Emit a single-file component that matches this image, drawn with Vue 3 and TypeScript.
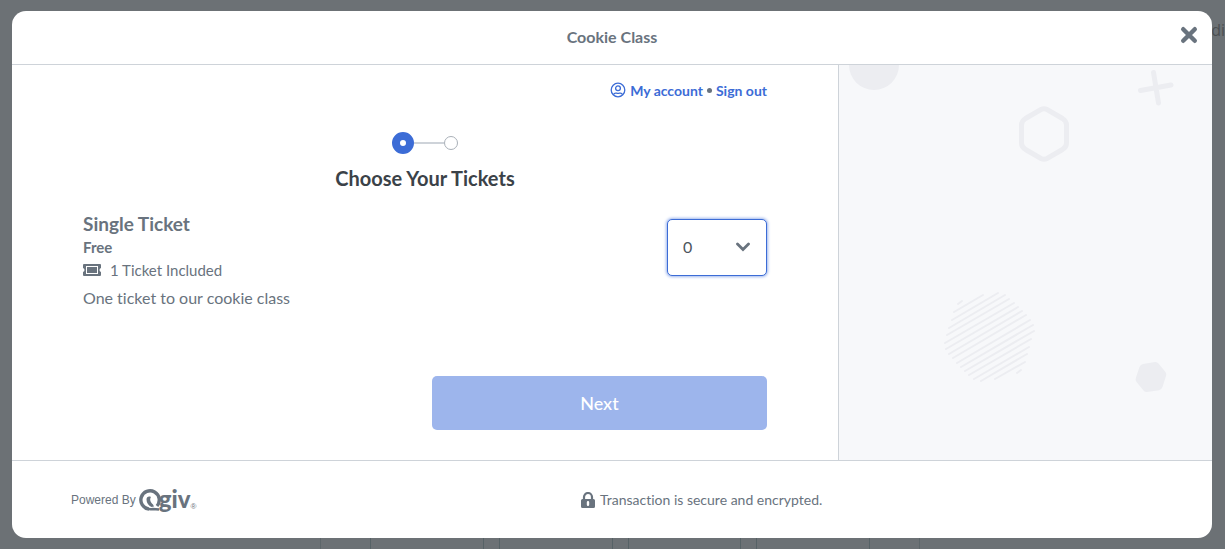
<script setup lang="ts">
import { ref } from 'vue'

interface Ticket {
  name: string
  price: string
  included: string
  description: string
}

const ticket: Ticket = {
  name: 'Single Ticket',
  price: 'Free',
  included: '1 Ticket Included',
  description: 'One ticket to our cookie class',
}

const quantity = ref(0)
const quantities = [0, 1, 2, 3, 4, 5]

/* Stripes of the round hatched decoration: x1, y1, x2, y2 */
const stripes: number[][] = [
  [28, 24, 32, 21],
  [24, 32, 53, 15],
  [22, 40, 68, 13],
  [19, 48, 75, 15],
  [17, 55, 79, 19],
  [15, 63, 84, 23],
  [16, 69, 88, 27],
  [19, 74, 92, 31],
  [23, 78, 96, 35],
  [27, 83, 100, 40],
  [31, 87, 103, 45],
  [35, 91, 104, 51],
  [39, 95, 101, 59],
  [44, 99, 99, 67],
  [51, 101, 97, 74],
  [65, 99, 95, 82],
  [87, 93, 91, 90],
]
</script>

<template>
  <div class="page">
    <div class="backdrop-page" aria-hidden="true">
      <span class="edge-text">idi</span>
      <div class="amounts">
        <span v-for="n in 4" :key="n" class="amount"></span>
      </div>
    </div>

    <section class="modal" role="dialog" aria-labelledby="dialog-title">
      <header class="head">
        <h1 id="dialog-title">Cookie Class</h1>
        <button class="close" type="button" aria-label="Close">
          <svg width="18" height="18" viewBox="0 0 18 18">
            <path d="M3.200 3.200L14.800 14.800M14.800 3.200L3.200 14.800" stroke="currentColor" stroke-width="4.400" stroke-linecap="round" />
          </svg>
        </button>
      </header>

      <div class="body">
        <main class="content">
          <nav class="account">
            <svg width="16" height="16" viewBox="0 0 16 16" fill="none" stroke="currentColor" stroke-width="1.300">
              <circle cx="8" cy="8" r="6.800" />
              <circle cx="8" cy="6.300" r="2.400" />
              <path d="M3.400 12.700C4 11.300 5.200 10.900 6.500 11.200Q8 11.700 9.500 11.200C10.800 10.900 12 11.300 12.600 12.700" />
            </svg>
            <a href="#account">My account</a>
            <span class="dot"></span>
            <a href="#signout">Sign out</a>
          </nav>

          <div class="steps" aria-label="Step 1 of 2">
            <span class="step current"></span>
            <span class="bar"></span>
            <span class="step"></span>
          </div>
          <h2>Choose Your Tickets</h2>

          <div class="ticket">
            <div class="details">
              <h3>{{ ticket.name }}</h3>
              <p class="price">{{ ticket.price }}</p>
              <p class="included">
                <svg width="18" height="12" viewBox="0 0 18 12">
                  <path fill="currentColor" fill-rule="evenodd" d="M1 0H17Q18 0 18 1V4Q16.500 4.500 16.500 6Q16.500 7.500 18 8V11Q18 12 17 12H1Q0 12 0 11V8Q1.500 7.500 1.500 6Q1.500 4.500 0 4V1Q0 0 1 0ZM3 2V10H15V2ZM4 3H14V9H4Z" />
                </svg>
                {{ ticket.included }}
              </p>
              <p class="description">{{ ticket.description }}</p>
            </div>
            <div class="picker">
              <select v-model="quantity" aria-label="Single Ticket quantity">
                <option v-for="q in quantities" :key="q" :value="q">{{ q }}</option>
              </select>
              <svg class="chevron" width="14" height="10" viewBox="0 0 14 10" fill="none">
                <path d="M1.500 2L7 7.500L12.500 2" stroke="currentColor" stroke-width="2.800" stroke-linecap="round" />
              </svg>
            </div>
          </div>

          <button class="next" type="button">Next</button>
        </main>

        <aside class="side" aria-hidden="true">
          <svg class="shape circle" width="50" height="25" viewBox="0 0 50 25">
            <circle cx="25" cy="0" r="25" fill="currentColor" />
          </svg>
          <svg class="shape cross" width="36" height="36" viewBox="0 0 36 36">
            <path d="M15.500 2.500L20.500 33M2.500 20.500L33 15" stroke="currentColor" stroke-width="5" stroke-linecap="round" />
          </svg>
          <svg class="shape hexagon" width="50" height="56" viewBox="0 0 50 56">
            <path d="M22 3.500Q25 2 28 3.500L43.500 12.500Q47.500 15 47.500 19V37Q47.500 41 43.500 43.500L28 52.500Q25 54 22 52.500L6.500 43.500Q2.500 41 2.500 37V19Q2.500 15 6.500 12.500Z" fill="none" stroke="currentColor" stroke-width="5" />
          </svg>
          <svg class="shape hatch" width="120" height="110" viewBox="0 0 120 110">
            <line v-for="(s, i) in stripes" :key="i" :x1="s[0]" :y1="s[1]" :x2="s[2]" :y2="s[3]" stroke="currentColor" stroke-width="2" stroke-linecap="round" />
          </svg>
          <svg class="shape blob" width="32" height="32" viewBox="0 0 32 32">
            <path d="M8 3L20 1Q22 .7 23.500 2.500L30.500 11Q31.800 13 31 15L27.500 26Q26.500 28.700 24 29.200L12 31Q10 31.200 8.500 29.500L1.500 21Q0 19 1 16.500L4.500 6Q5.500 3.300 8 3Z" fill="currentColor" />
          </svg>
        </aside>
      </div>

      <footer class="foot">
        <div class="powered">
          <span>Powered By</span>
          <svg class="mark" width="23" height="22" viewBox="0 0 23 22" fill="none">
            <path d="M18 17A9.200 9.200 0 1 0 10 20.100" stroke="currentColor" stroke-width="3.400" />
            <path d="M7.500 10.500C7.500 8 9.500 7 12 8C10.500 10 11 13 14 15.500L15 17.500L12.500 18C9.500 16.500 7.500 14 7.500 10.500Z" fill="currentColor" />
            <path d="M6 18.500Q9.500 21 14 20L20 20.500" stroke="currentColor" stroke-width="2.400" />
          </svg>
          <span class="brand">giv</span>
          <span class="reg">®</span>
        </div>
        <p class="secure">
          <svg width="14" height="16" viewBox="0 0 14 16">
            <path d="M3 8V5A4 4 0 0 1 11 5V8" fill="none" stroke="currentColor" stroke-width="2.200" />
            <path fill="currentColor" fill-rule="evenodd" d="M1.500 7H12.500Q14 7 14 8.500V14.500Q14 16 12.500 16H1.500Q0 16 0 14.500V8.500Q0 7 1.500 7ZM7 9Q5.800 9 5.800 10.200V12.800Q5.800 14 7 14Q8.200 14 8.200 12.800V10.200Q8.200 9 7 9Z" />
          </svg>
          Transaction is secure and encrypted.
        </p>
      </footer>
    </section>
  </div>
</template>

<style>
body {
  margin: 0;
}
</style>

<style scoped>
* {
  box-sizing: border-box;
}

h1,
h2,
h3,
p {
  margin: 0;
}

.page {
  position: relative;
  display: flex;
  min-height: 100vh;
  padding: 11px 13px 11px 12px;
  overflow: hidden;
  background: #6c7175;
  color: #69737e;
  font-family: Lato, "Liberation Sans", sans-serif;
  font-variant-ligatures: none;
}

.backdrop-page {
  position: absolute;
  inset: 0;
  display: flex;
  flex-direction: column;
  justify-content: space-between;
  align-items: center;
  overflow: hidden;
}

.edge-text {
  align-self: flex-end;
  margin-top: 20px;
  color: #4b4f52;
  font: 16px/20px "Open Sans", sans-serif;
}

.amounts {
  display: flex;
  gap: 15px;
  width: 600px;
  height: 60px;
  margin-left: 15px;
  padding: 0 49px;
  border: solid #5d666a;
  border-width: 0 1px;
}

.amount {
  flex: 1;
  border: solid #566266;
  border-width: 0 1px;
}

.modal {
  position: relative;
  display: flex;
  flex: 1;
  flex-direction: column;
  overflow: hidden;
  border-radius: 14px;
  background: #fff;
}

.head {
  display: grid;
  grid-template-columns: 1fr auto 1fr;
  align-items: center;
  height: 54px;
  padding: 0 14px 2px;
  border-bottom: 1px solid #ced3d9;
}

.head h1 {
  grid-column: 2;
  font-size: 16px;
  line-height: 20px;
}

.close {
  display: flex;
  justify-self: end;
  margin-bottom: 4px;
  padding: 0;
  border: 0;
  background: none;
  color: #69737e;
}

.body {
  display: grid;
  flex: 1;
  grid-template-columns: 826fr 374fr;
}

.content {
  display: flex;
  flex-direction: column;
  padding: 15px 71px 30px;
}

.account {
  display: flex;
  align-items: center;
  align-self: flex-end;
  gap: 4px;
  height: 20px;
  color: #3c6cd6;
  font-size: 14px;
  font-weight: 700;
}

.account a {
  color: inherit;
  text-decoration: none;
}

.dot {
  width: 5px;
  height: 5px;
  border-radius: 50%;
  background: #69737e;
}

.steps {
  display: flex;
  align-items: center;
  align-self: center;
  height: 22px;
  margin-top: 32px;
}

.step {
  width: 14px;
  height: 14px;
  border: 1px solid #a9b0b8;
  border-radius: 50%;
}

.step.current {
  width: 22px;
  height: 22px;
  border: 8px solid #3c6cd6;
}

.bar {
  width: 30px;
  height: 2px;
  background: #ced3d9;
}

h2 {
  margin-top: 11px;
  color: #3b4248;
  font-size: 20px;
  line-height: 26px;
  text-align: center;
}

.ticket {
  display: flex;
  justify-content: space-between;
  margin-top: 21px;
}

.details h3 {
  font-size: 19px;
  line-height: 24px;
}

.price {
  font-size: 15px;
  font-weight: 700;
  line-height: 22px;
}

.included {
  display: flex;
  align-items: center;
  gap: 9px;
  font-size: 15px;
  line-height: 24px;
}

.description {
  margin-top: 4px;
  font-size: 16px;
  line-height: 24px;
}

.picker {
  position: relative;
  margin-top: 7px;
}

.picker select {
  width: 100px;
  height: 57px;
  padding: 0 15px 2px;
  appearance: none;
  border: 1px solid #3c6cd6;
  border-radius: 5px;
  outline: none;
  background: #fff;
  box-shadow: 0 0 3px 1px #9db5ec;
  color: #4d555d;
  font: 16px Lato, sans-serif;
}

.chevron {
  position: absolute;
  top: 23px;
  right: 17px;
  pointer-events: none;
}

.next {
  align-self: flex-end;
  width: 49%;
  height: 54px;
  margin-top: auto;
  border: 0;
  border-radius: 5px;
  background: #9db5ec;
  color: #fff;
  font: 500 18px Lato, sans-serif;
}

.side {
  position: relative;
  overflow: hidden;
  border-left: 1px solid #ced3d9;
  background: #f7f8fa;
  color: #ecedf1;
}

.shape {
  position: absolute;
}

.circle {
  top: 0;
  left: 10px;
}

.cross {
  top: 5px;
  left: 299px;
}

.hexagon {
  top: 41px;
  left: 180px;
}

.hatch {
  top: 215px;
  left: 91px;
}

.blob {
  top: 296px;
  left: 296px;
}

.foot {
  display: grid;
  grid-template-columns: 510fr 572fr;
  align-items: center;
  height: 78px;
  padding: 0 59px;
  border-top: 1px solid #ced3d9;
}

.powered {
  display: flex;
  align-items: center;
  font: 12px/16px "Liberation Sans", sans-serif;
}

.mark {
  margin-left: 3px;
}

.brand {
  margin-left: -3px;
  padding-bottom: 2px;
  font: 900 24px/24px Lato, sans-serif;
}

.reg {
  align-self: flex-end;
  font-size: 8px;
  line-height: 12px;
}

.secure {
  display: flex;
  align-items: center;
  gap: 5px;
  font-size: 14px;
  line-height: 20px;
}
</style>
